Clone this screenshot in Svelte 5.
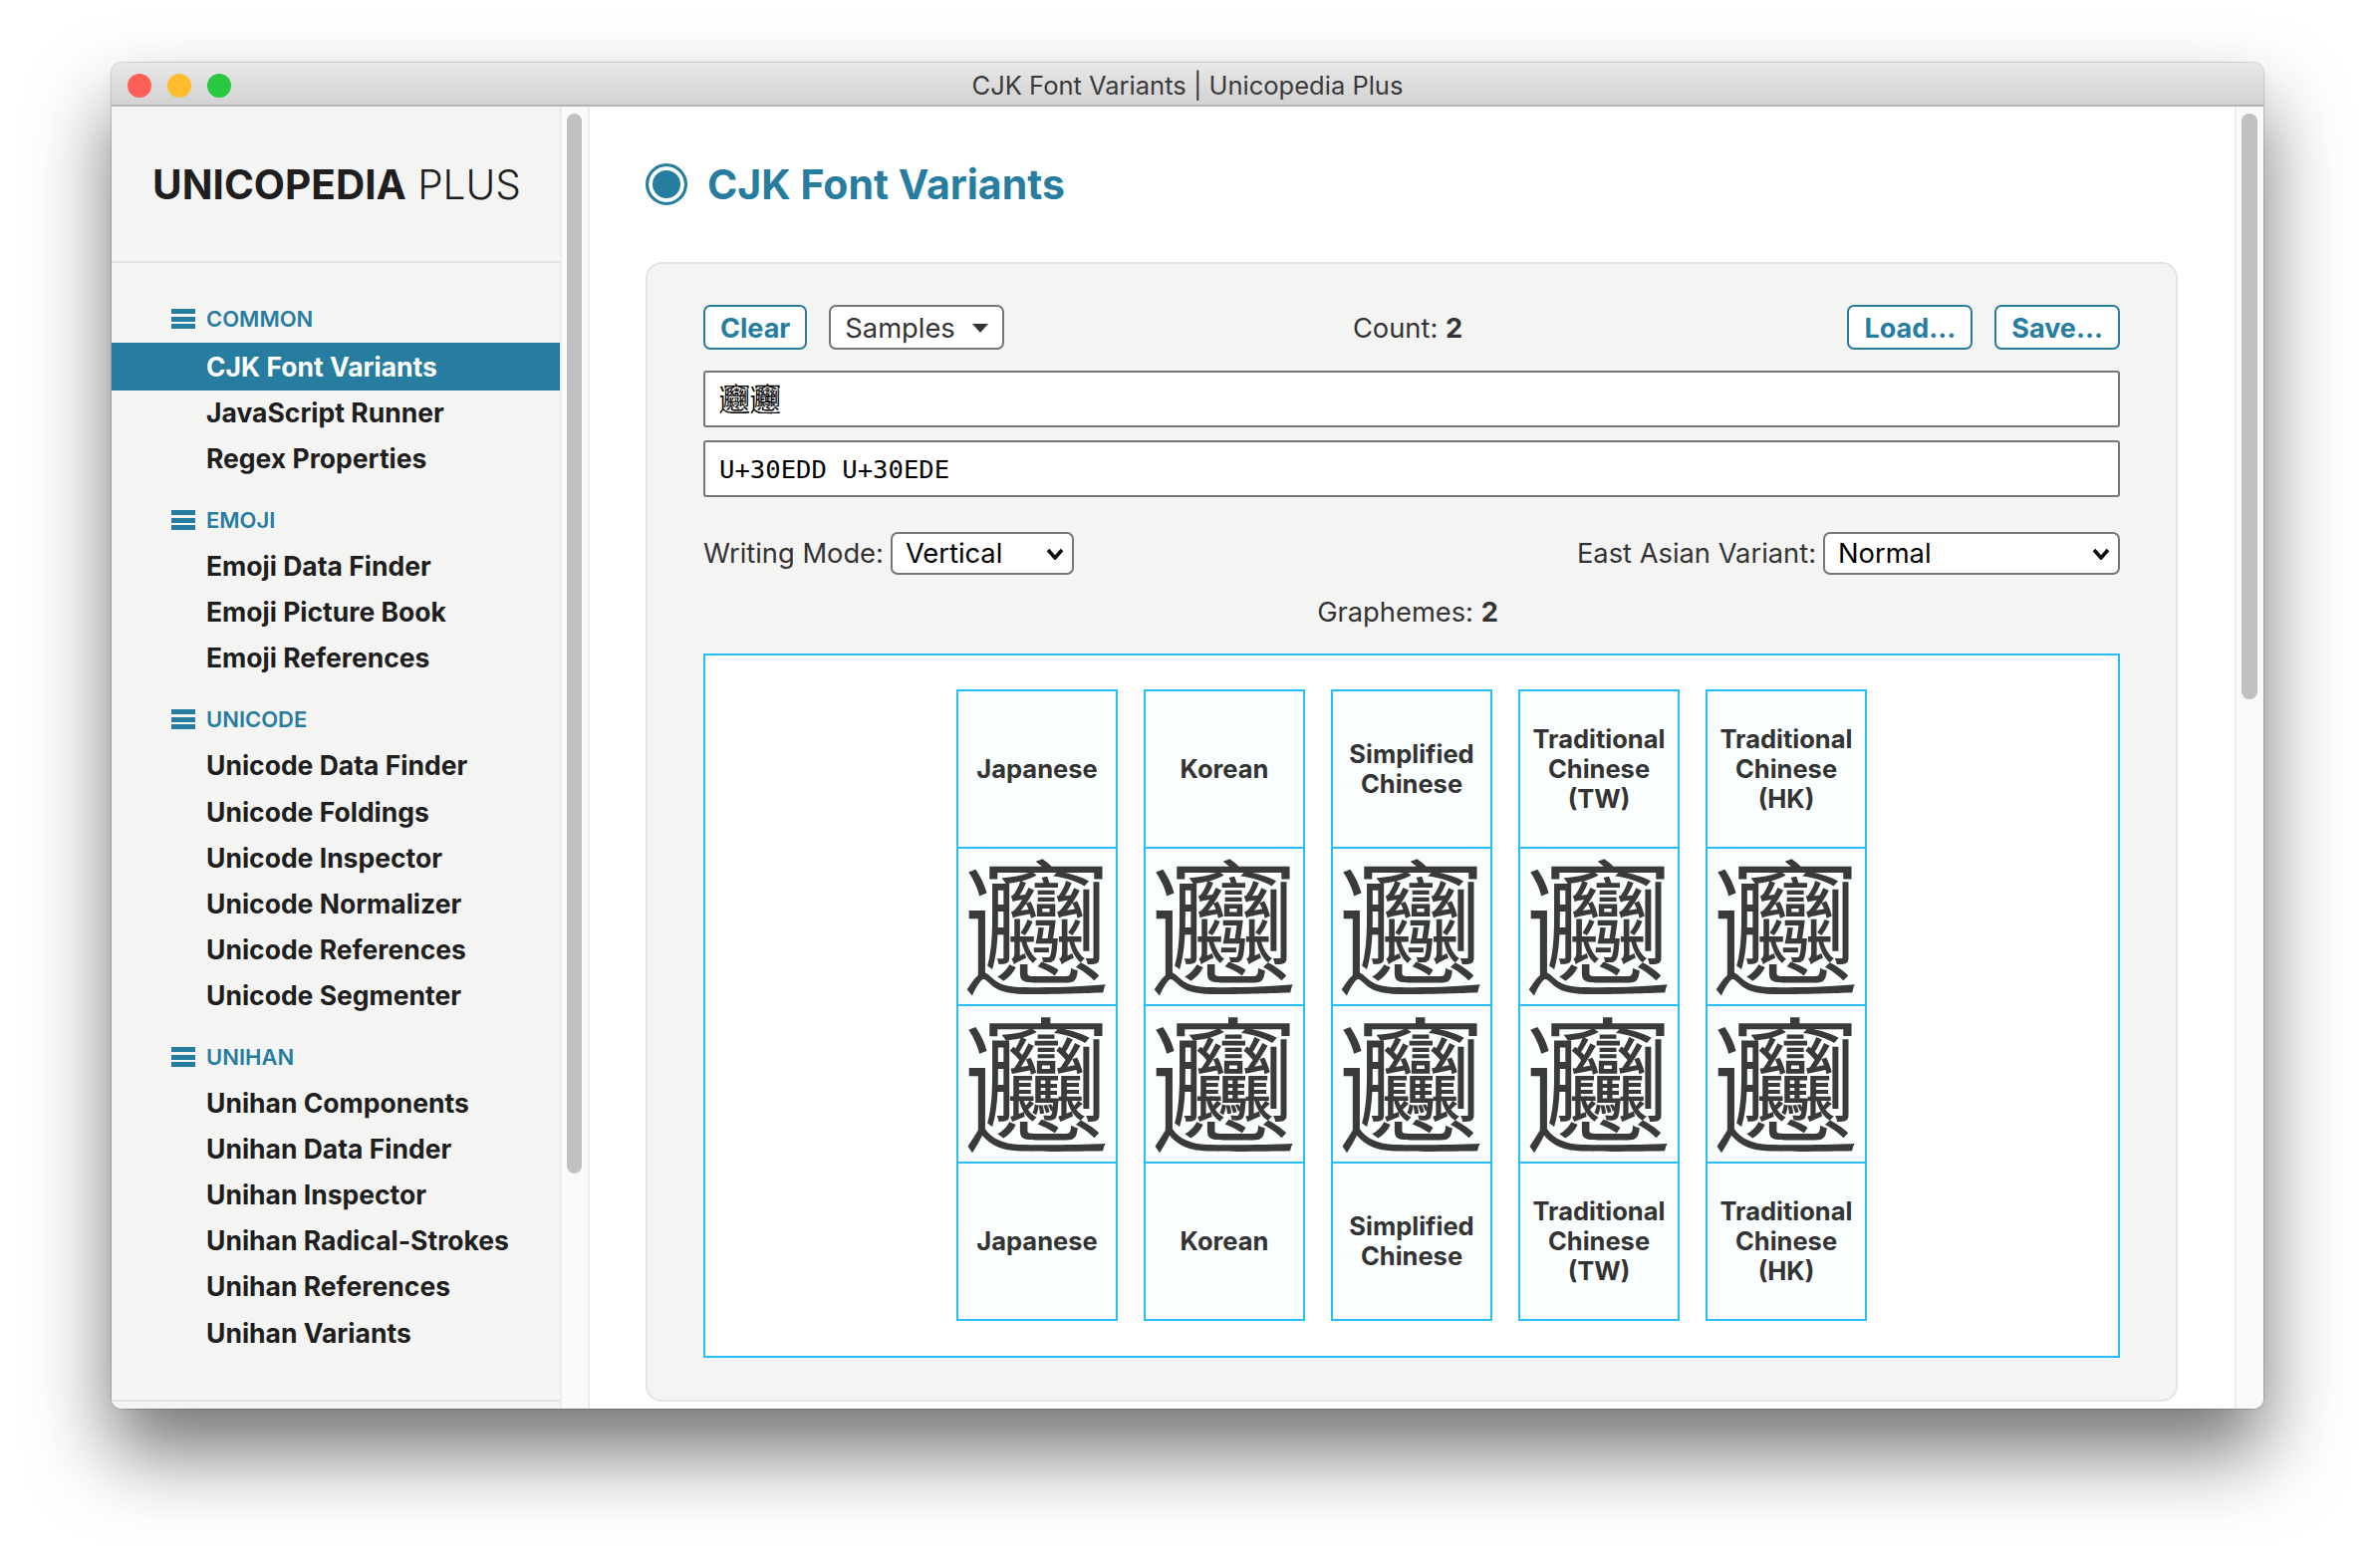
<script>
  // Sidebar navigation
  const sections = [
    { name: 'COMMON', items: ['CJK Font Variants', 'JavaScript Runner', 'Regex Properties'] },
    { name: 'EMOJI', items: ['Emoji Data Finder', 'Emoji Picture Book', 'Emoji References'] },
    { name: 'UNICODE', items: ['Unicode Data Finder', 'Unicode Foldings', 'Unicode Inspector', 'Unicode Normalizer', 'Unicode References', 'Unicode Segmenter'] },
    { name: 'UNIHAN', items: ['Unihan Components', 'Unihan Data Finder', 'Unihan Inspector', 'Unihan Radical-Strokes', 'Unihan References', 'Unihan Variants'] }
  ];

  const variants = [
    { label: ['Japanese'], lang: 'ja' },
    { label: ['Korean'], lang: 'ko' },
    { label: ['Simplified', 'Chinese'], lang: 'zh-Hans' },
    { label: ['Traditional', 'Chinese', '(TW)'], lang: 'zh-Hant-TW' },
    { label: ['Traditional', 'Chinese', '(HK)'], lang: 'zh-Hant-HK' }
  ];

  const glyphs = ['\u{30EDD}', '\u{30EDE}'];
</script>

<div class="page">
  <div class="window">
    <div class="titlebar">
      <div class="lights">
        <span class="light red"></span>
        <span class="light yellow"></span>
        <span class="light green"></span>
      </div>
      <div class="window-title">CJK Font Variants | Unicopedia Plus</div>
    </div>

    <div class="content">
      <aside class="sidebar">
        <div class="brand"><b>UNICOPEDIA</b> <span>PLUS</span></div>
        <nav class="nav">
          {#each sections as section}
            <div class="nav-section">
              <div class="nav-heading">
                <span class="burger"><i></i><i></i><i></i></span>
                {section.name}
              </div>
              {#each section.items as item}
                <div class="nav-item" class:active={item === 'CJK Font Variants'}>{item}</div>
              {/each}
            </div>
          {/each}
        </nav>
        <div class="sidebar-end"></div>
      </aside>
      <div class="scrolltrack side"><div class="thumb side-thumb"></div></div>

      <main class="main">
        <h1 class="page-title"><span class="radio"></span>CJK Font Variants</h1>

        <section class="panel">
          <div class="toolbar">
            <div class="group">
              <button class="btn">Clear</button>
              <button class="samples">Samples <span class="caret"></span></button>
            </div>
            <div class="count">Count: <b>2</b></div>
            <div class="group right">
              <button class="btn">Load...</button>
              <button class="btn">Save...</button>
            </div>
          </div>

          <input class="field glyph-field" type="text" value={glyphs.join('')} />
          <input class="field code-field" type="text" value="U+30EDD U+30EDE" />

          <div class="options">
            <label class="option">Writing Mode:
              <select class="writing"><option>Vertical</option></select>
            </label>
            <label class="option">East Asian Variant:
              <select class="variant"><option>Normal</option></select>
            </label>
          </div>

          <div class="graphemes">Graphemes: <b>2</b></div>

          <div class="output">
            {#each variants as v}
              <div class="column">
                <div class="cell label">{#each v.label as line}<span>{line}</span>{/each}</div>
                {#each glyphs as g}
                  <div class="cell glyph" lang={v.lang}>{g}</div>
                {/each}
                <div class="cell label">{#each v.label as line}<span>{line}</span>{/each}</div>
              </div>
            {/each}
          </div>
        </section>
      </main>
      <div class="scrolltrack"><div class="thumb main-thumb"></div></div>
    </div>
  </div>
</div>

<style>
  :global(body) {
    background: #fff;
    font-family: Inter, "Noto Sans CJK JP", sans-serif;
  }

  .page {
    height: 1574px;
    box-sizing: border-box;
    padding: 63px 0 0 112px;
    overflow: hidden;
  }

  .window {
    width: 2160px;
    height: 1351px;
    border-radius: 10px;
    overflow: hidden;
    display: flex;
    flex-direction: column;
    box-shadow: 0 44px 80px rgba(0, 0, 0, 0.55), 0 0 2px rgba(0, 0, 0, 0.5);
  }

  .titlebar {
    height: 44px;
    flex: none;
    box-sizing: border-box;
    display: flex;
    align-items: center;
    justify-content: center;
    position: relative;
    background: linear-gradient(#e8e8e8, #d2d2d2);
    border-bottom: 2px solid #b4b4b4;
  }

  .lights {
    position: absolute;
    left: 16px;
    top: 11px;
    display: flex;
    gap: 16px;
  }

  .light {
    width: 24px;
    height: 24px;
    border-radius: 50%;
  }
  .red { background: #ff5f57; }
  .yellow { background: #ffbd2e; }
  .green { background: #28c940; }

  .window-title {
    font-size: 25.5px;
    color: #3a3a3a;
    padding-top: 2px;
  }

  .content {
    flex: 1;
    display: flex;
    min-height: 0;
    background: #fff;
  }

  .sidebar {
    width: 450px;
    flex: none;
    background: #f4f4f3;
    display: flex;
    flex-direction: column;
    color: #1e1e1e;
  }

  .brand {
    height: 157px;
    flex: none;
    box-sizing: border-box;
    padding: 54px 0 0 41px;
    font-size: 40.5px;
    line-height: 50px;
    border-bottom: 2px solid #e2e2e0;
    white-space: nowrap;
  }
  .brand b { font-weight: 700; }
  .brand span { font-weight: 300; }

  .nav {
    padding-top: 32px;
    flex: 1;
  }

  .nav-section {
    margin-bottom: 14px;
  }

  .nav-heading {
    display: flex;
    align-items: center;
    height: 48px;
    padding-left: 60px;
    gap: 11px;
    font-size: 22px;
    font-weight: 600;
    color: #267da0;
  }

  .burger {
    width: 24px;
    display: flex;
    flex-direction: column;
    gap: 2.5px;
  }
  .burger i {
    height: 5px;
    background: #267da0;
  }

  .nav-item {
    height: 46.1px;
    line-height: 45px;
    padding-left: 95px;
    font-size: 26.5px;
    font-weight: 700;
  }
  .nav-item.active {
    height: 48px;
    line-height: 48px;
    background: #267da0;
    color: #fff;
  }

  .sidebar-end {
    height: 7px;
    flex: none;
    border-top: 2px solid #e2e2e0;
  }

  .scrolltrack {
    width: 29px;
    flex: none;
    background: #fafafa;
    border-left: 2px solid #ececec;
    box-sizing: border-box;
    padding: 7px 6px 0 5px;
  }
  .scrolltrack.side {
    width: 30px;
    border-right: 2px solid #ececec;
  }

  .thumb {
    background: #c1c1c1;
    border-radius: 8px;
  }
  .side-thumb { height: 1064px; }
  .main-thumb { height: 588px; }

  .main {
    flex: 1;
    min-width: 0;
    padding: 0 57px 0 56px;
    overflow: hidden;
  }

  .page-title {
    display: flex;
    align-items: center;
    gap: 20px;
    margin: 53px 0;
    height: 50px;
    font-size: 41px;
    font-weight: 700;
    color: #267da0;
  }

  .radio {
    width: 42px;
    height: 42px;
    box-sizing: border-box;
    border-radius: 50%;
    border: 3px solid #267da0;
    background: #267da0;
    box-shadow: inset 0 0 0 4px #fff;
  }

  .panel {
    background: #f4f4f3;
    border: 2px solid #e4e4e2;
    border-radius: 16px;
    padding: 41px 56px 42px;
    color: #333;
    font-size: 27.3px;
  }

  .toolbar {
    display: flex;
    justify-content: space-between;
    align-items: center;
    height: 45px;
  }

  .group {
    display: flex;
    gap: 22px;
    width: 300px;
  }
  .group.right { justify-content: flex-end; }

  .count {
    margin-right: 8px;
    padding-top: 2px;
  }

  .btn {
    height: 45px;
    padding: 2px 15px 0;
    font: 700 27px Inter, sans-serif;
    color: #267da0;
    background: #fff;
    border: 2px solid #267da0;
    border-radius: 7px;
  }

  .samples {
    height: 45px;
    width: 176px;
    flex: none;
    box-sizing: border-box;
    padding: 2px 14px 0;
    display: flex;
    align-items: center;
    justify-content: space-between;
    font: 400 27.3px Inter, sans-serif;
    color: #333;
    background: #fff;
    border: 2px solid #767676;
    border-radius: 7px;
  }

  .caret {
    width: 0;
    height: 0;
    border-left: 8px solid transparent;
    border-right: 8px solid transparent;
    border-top: 9px solid #333;
  }

  .field {
    display: block;
    width: 100%;
    height: 57px;
    box-sizing: border-box;
    padding: 0 14px;
    background: #fff;
    border: 2px solid #767676;
    border-radius: 3px;
    color: #000;
  }
  .glyph-field {
    margin-top: 21px;
    padding-bottom: 4px;
    font: 31px "Noto Sans CJK JP", sans-serif;
  }
  .code-field {
    margin-top: 13px;
    font: 25.6px "DejaVu Sans Mono", monospace;
  }

  .options {
    display: flex;
    justify-content: space-between;
    align-items: center;
    margin-top: 35px;
    height: 43px;
  }

  .option {
    display: flex;
    align-items: center;
    gap: 7px;
  }

  select {
    height: 43px;
    box-sizing: border-box;
    padding: 0 8px 0 13px;
    font: 400 27.3px Inter, sans-serif;
    color: #000;
    border: 2px solid #767676;
    border-radius: 7px;
    appearance: none;
    background: #fff url("data:image/svg+xml,%3Csvg xmlns='http://www.w3.org/2000/svg' width='18' height='12'%3E%3Cpath d='M2 2l7 8 7-8' fill='none' stroke='%23111' stroke-width='3.6'/%3E%3C/svg%3E") no-repeat right 8px center;
  }
  .writing { width: 184px; }
  .variant { width: 298px; }

  .graphemes {
    text-align: center;
    height: 42px;
    line-height: 44px;
    margin-top: 16px;
    margin-right: 8px;
  }

  .output {
    margin-top: 21px;
    height: 707px;
    box-sizing: border-box;
    background: #fff;
    border: 2px solid #27bdf8;
    display: flex;
    justify-content: center;
    gap: 26px;
    padding-top: 34px;
  }

  .column {
    width: 162px;
    display: flex;
    flex-direction: column;
    height: 634px;
    border: 2px solid #27bdf8;
    box-sizing: border-box;
    background: #fafeff;
  }

  .cell {
    height: 158px;
    flex: none;
    box-sizing: border-box;
    display: flex;
    align-items: center;
    justify-content: center;
    border-bottom: 2px solid #27bdf8;
  }
  .cell:last-child {
    height: 156px;
    border-bottom: 0;
  }

  .label {
    flex-direction: column;
    font-size: 25.5px;
    line-height: 30px;
    font-weight: 700;
    color: #333;
  }

  .glyph {
    font-family: "Noto Sans CJK JP", "Noto Sans CJK SC", sans-serif;
    font-size: 145px;
    line-height: 1;
    color: #3a3a3a;
    padding-bottom: 12px;
  }
</style>
